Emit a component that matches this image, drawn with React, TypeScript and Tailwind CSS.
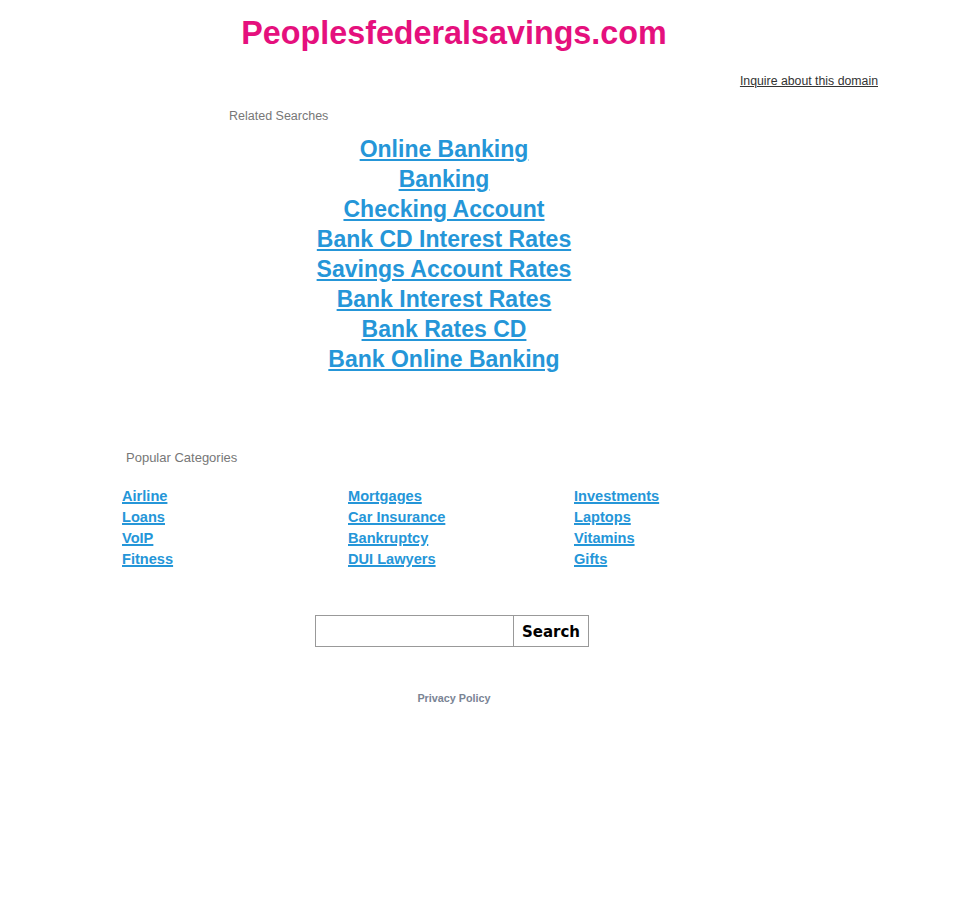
import React from 'react';

const related = [
  'Online Banking',
  'Banking',
  'Checking Account',
  'Bank CD Interest Rates',
  'Savings Account Rates',
  'Bank Interest Rates',
  'Bank Rates CD',
  'Bank Online Banking',
];

const categories = [
  ['Airline', 'Loans', 'VoIP', 'Fitness'],
  ['Mortgages', 'Car Insurance', 'Bankruptcy', 'DUI Lawyers'],
  ['Investments', 'Laptops', 'Vitamins', 'Gifts'],
];

export default function App() {
  return (
    <div className="min-h-[915px] bg-white font-['Liberation_Sans',Arial,sans-serif]">
      <div className="w-[908px]">
        {/* Header */}
        <h1 className="pt-[14px] text-center text-[32.3px] font-bold leading-[38px] text-[#e5107d]">
          Peoplesfederalsavings.com
        </h1>
        <div className="mt-[22px] flex justify-end pr-[30px]">
          <a href="#" className="text-[12.3px] leading-[15px] text-[#333] underline">
            Inquire about this domain
          </a>
        </div>

        {/* Related searches */}
        <div className="ml-[229px] mt-[20px] w-[430px]">
          <p className="text-[12.5px] leading-[15px] text-[#777]">Related Searches</p>
          <ul className="mt-[10px] flex flex-col items-center">
            {related.map((r) => (
              <li key={r} className="text-[23px] leading-[30px]">
                <a href="#" className="font-bold text-[#2596d8] underline">
                  {r}
                </a>
              </li>
            ))}
          </ul>
        </div>

        {/* Popular categories */}
        <div className="ml-[122px] mt-[76px]">
          <p className="pl-[4px] text-[13px] leading-[16px] text-[#777]">Popular Categories</p>
          <div className="mt-[20px] grid w-[678px] grid-cols-3">
            {categories.map((col, i) => (
              <ul key={i} className="flex flex-col">
                {col.map((c) => (
                  <li key={c} className="text-[14.6px] leading-[21px]">
                    <a href="#" className="font-bold text-[#2596d8] underline decoration-2">
                      {c}
                    </a>
                  </li>
                ))}
              </ul>
            ))}
          </div>
        </div>

        {/* Search */}
        <div className="mt-[45px] flex justify-center">
          <div className="ml-[-4px] flex">
            <input className="h-[32px] w-[199px] border border-[#999] outline-none" />
            <button className="h-[32px] w-[75px] border border-l-0 border-[#999] bg-white pt-[2px] font-['DejaVu_Sans',sans-serif] text-[15px] font-bold text-black">
              Search
            </button>
          </div>
        </div>

        <div className="mt-[38px] text-center">
          <a href="#" className="text-[10.8px] font-bold text-[#7a8494]">
            Privacy Policy
          </a>
        </div>
      </div>
    </div>
  );
}
